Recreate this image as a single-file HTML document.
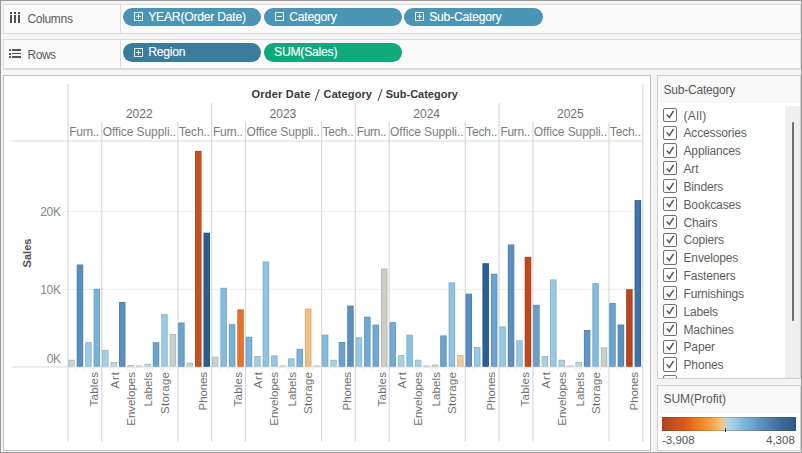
<!DOCTYPE html>
<html><head><meta charset="utf-8"><style>
html,body{margin:0;padding:0;}
body{width:802px;height:453px;position:relative;overflow:hidden;background:#f4f4f4;font-family:"Liberation Sans", sans-serif;}
.frame{position:absolute;left:0;top:0;width:800px;height:451px;border:1px solid #9a9a9a;}
.box{position:absolute;box-sizing:border-box;border:1px solid #dcdcdc;background:#fafafa;}
.t{position:absolute;white-space:nowrap;line-height:1;}
.rl{position:absolute;width:200px;height:14px;line-height:14px;text-align:right;font-size:11.5px;color:#717171;white-space:nowrap;transform-origin:100px 7px;transform:rotate(-90deg) translate(-100px,0);}
.pill{position:absolute;height:18.7px;border-radius:9.4px;color:#fff;font-size:12.2px;line-height:18.0px;letter-spacing:-0.25px;white-space:nowrap;-webkit-text-stroke:0.12px #fff;}
.pill .ic{position:absolute;left:11px;top:4.7px;width:7px;height:7px;border:1px solid #e8f0f4;}
.pill .tx{position:absolute;left:25.2px;top:0;}
.panel{position:absolute;box-sizing:border-box;border:1px solid #cfcfcf;background:#fff;}
.cb{position:absolute;left:663px;width:14.3px;height:14.2px;box-sizing:border-box;border:1.5px solid #727272;border-radius:2px;background:#fff;}
.fi{position:absolute;left:683.5px;font-size:12px;letter-spacing:-0.15px;color:#555;white-space:nowrap;line-height:1;}
</style></head><body>
<div class="frame"></div>
<div class="box" style="left:3px;top:4px;width:798px;height:30px;"></div>
<div class="box" style="left:3px;top:39px;width:798px;height:31px;border-bottom:2px solid #dedede"></div>
<div style="position:absolute;left:120px;top:5px;width:1px;height:28px;background:#dcdcdc"></div>
<div style="position:absolute;left:120px;top:40px;width:1px;height:28px;background:#dcdcdc"></div>
<div style="position:absolute;left:10.30px;top:12.2px;width:1.8px;height:1.8px;background:#505050"></div><div style="position:absolute;left:10.30px;top:15.1px;width:1.8px;height:8px;background:#505050"></div><div style="position:absolute;left:14.00px;top:12.2px;width:1.8px;height:1.8px;background:#505050"></div><div style="position:absolute;left:14.00px;top:15.1px;width:1.8px;height:8px;background:#505050"></div><div style="position:absolute;left:17.80px;top:12.2px;width:1.8px;height:1.8px;background:#505050"></div><div style="position:absolute;left:17.80px;top:15.1px;width:1.8px;height:8px;background:#505050"></div><div style="position:absolute;left:9.2px;top:48.80px;width:2px;height:2px;background:#505050;border-radius:0.5px"></div><div style="position:absolute;left:12.3px;top:48.90px;width:8.4px;height:1.8px;background:#555"></div><div style="position:absolute;left:9.2px;top:52.50px;width:2px;height:2px;background:#505050;border-radius:0.5px"></div><div style="position:absolute;left:12.3px;top:52.60px;width:8.4px;height:1.8px;background:#555"></div><div style="position:absolute;left:9.2px;top:56.20px;width:2px;height:2px;background:#505050;border-radius:0.5px"></div><div style="position:absolute;left:12.3px;top:56.30px;width:8.4px;height:1.8px;background:#555"></div><div class="t" style="left:27.4px;top:12.94px;font-size:12px;color:#5a5a5a;letter-spacing:-0.3px">Columns</div><div class="t" style="left:27.6px;top:48.94px;font-size:12px;color:#5a5a5a;letter-spacing:-0.5px">Rows</div><div class="pill" style="left:123px;top:7.7px;width:138px;background:#4a94b4"><div class="ic"><div style="position:absolute;left:1px;top:3px;width:5px;height:1px;background:#e8f0f4"></div><div style="position:absolute;left:3px;top:1px;width:1px;height:5px;background:#e8f0f4"></div></div><div class="tx">YEAR(Order Date)</div></div><div class="pill" style="left:264px;top:7.7px;width:138px;background:#4a94b4"><div class="ic"><div style="position:absolute;left:1px;top:3px;width:5px;height:1px;background:#e8f0f4"></div></div><div class="tx">Category</div></div><div class="pill" style="left:404px;top:7.7px;width:139px;background:#4a94b4"><div class="ic"><div style="position:absolute;left:1px;top:3px;width:5px;height:1px;background:#e8f0f4"></div><div style="position:absolute;left:3px;top:1px;width:1px;height:5px;background:#e8f0f4"></div></div><div class="tx">Sub-Category</div></div><div class="pill" style="left:123px;top:43px;width:138px;background:#3b7c9c"><div class="ic"><div style="position:absolute;left:1px;top:3px;width:5px;height:1px;background:#e8f0f4"></div><div style="position:absolute;left:3px;top:1px;width:1px;height:5px;background:#e8f0f4"></div></div><div class="tx">Region</div></div><div class="pill" style="left:264px;top:43px;width:138px;background:#0eaa7a"><div class="tx" style="left:10px">SUM(Sales)</div></div><div class="panel" style="left:3px;top:75px;width:648px;height:376px;border-color:#c4c4c4"></div><svg style="position:absolute;left:0;top:0" width="802" height="453" viewBox="0 0 802 453"><line x1="62.5" y1="211.4" x2="642" y2="211.4" stroke="#efefef" stroke-width="1"/><line x1="62.5" y1="289.4" x2="642" y2="289.4" stroke="#efefef" stroke-width="1"/><line x1="12" y1="141" x2="642" y2="141" stroke="#d9d9d9" stroke-width="1"/><line x1="315.1" y1="100.9" x2="319.3" y2="89.2" stroke="#4a4a4a" stroke-width="1.1"/><line x1="377.9" y1="100.9" x2="382.1" y2="89.2" stroke="#4a4a4a" stroke-width="1.1"/><line x1="12" y1="367" x2="642" y2="367" stroke="#dcdcdc" stroke-width="1.2"/><line x1="68.00" y1="84" x2="68.00" y2="441.5" stroke="#d6d6d6" stroke-width="1.1"/><line x1="211.70" y1="103" x2="211.70" y2="441.5" stroke="#d6d6d6" stroke-width="1.1"/><line x1="355.40" y1="103" x2="355.40" y2="441.5" stroke="#d6d6d6" stroke-width="1.1"/><line x1="499.10" y1="103" x2="499.10" y2="441.5" stroke="#d6d6d6" stroke-width="1.1"/><line x1="642.80" y1="84" x2="642.80" y2="441.5" stroke="#d6d6d6" stroke-width="1.1"/><line x1="101.81" y1="122" x2="101.81" y2="441.5" stroke="#d6d6d6" stroke-width="1.1"/><line x1="177.89" y1="122" x2="177.89" y2="441.5" stroke="#d6d6d6" stroke-width="1.1"/><line x1="245.51" y1="122" x2="245.51" y2="441.5" stroke="#d6d6d6" stroke-width="1.1"/><line x1="321.59" y1="122" x2="321.59" y2="441.5" stroke="#d6d6d6" stroke-width="1.1"/><line x1="389.21" y1="122" x2="389.21" y2="441.5" stroke="#d6d6d6" stroke-width="1.1"/><line x1="465.29" y1="122" x2="465.29" y2="441.5" stroke="#d6d6d6" stroke-width="1.1"/><line x1="532.91" y1="122" x2="532.91" y2="441.5" stroke="#d6d6d6" stroke-width="1.1"/><line x1="608.99" y1="122" x2="608.99" y2="441.5" stroke="#d6d6d6" stroke-width="1.1"/><line x1="76.45" y1="367.6" x2="76.45" y2="370" stroke="#ededed" stroke-width="1"/><line x1="84.91" y1="367.6" x2="84.91" y2="370" stroke="#ededed" stroke-width="1"/><line x1="93.36" y1="367.6" x2="93.36" y2="370" stroke="#ededed" stroke-width="1"/><line x1="110.26" y1="367.6" x2="110.26" y2="370" stroke="#ededed" stroke-width="1"/><line x1="118.72" y1="367.6" x2="118.72" y2="370" stroke="#ededed" stroke-width="1"/><line x1="127.17" y1="367.6" x2="127.17" y2="370" stroke="#ededed" stroke-width="1"/><line x1="135.62" y1="367.6" x2="135.62" y2="370" stroke="#ededed" stroke-width="1"/><line x1="144.08" y1="367.6" x2="144.08" y2="370" stroke="#ededed" stroke-width="1"/><line x1="152.53" y1="367.6" x2="152.53" y2="370" stroke="#ededed" stroke-width="1"/><line x1="160.98" y1="367.6" x2="160.98" y2="370" stroke="#ededed" stroke-width="1"/><line x1="169.44" y1="367.6" x2="169.44" y2="370" stroke="#ededed" stroke-width="1"/><line x1="186.34" y1="367.6" x2="186.34" y2="370" stroke="#ededed" stroke-width="1"/><line x1="194.79" y1="367.6" x2="194.79" y2="370" stroke="#ededed" stroke-width="1"/><line x1="203.25" y1="367.6" x2="203.25" y2="370" stroke="#ededed" stroke-width="1"/><line x1="220.15" y1="367.6" x2="220.15" y2="370" stroke="#ededed" stroke-width="1"/><line x1="228.61" y1="367.6" x2="228.61" y2="370" stroke="#ededed" stroke-width="1"/><line x1="237.06" y1="367.6" x2="237.06" y2="370" stroke="#ededed" stroke-width="1"/><line x1="253.96" y1="367.6" x2="253.96" y2="370" stroke="#ededed" stroke-width="1"/><line x1="262.42" y1="367.6" x2="262.42" y2="370" stroke="#ededed" stroke-width="1"/><line x1="270.87" y1="367.6" x2="270.87" y2="370" stroke="#ededed" stroke-width="1"/><line x1="279.32" y1="367.6" x2="279.32" y2="370" stroke="#ededed" stroke-width="1"/><line x1="287.78" y1="367.6" x2="287.78" y2="370" stroke="#ededed" stroke-width="1"/><line x1="296.23" y1="367.6" x2="296.23" y2="370" stroke="#ededed" stroke-width="1"/><line x1="304.68" y1="367.6" x2="304.68" y2="370" stroke="#ededed" stroke-width="1"/><line x1="313.14" y1="367.6" x2="313.14" y2="370" stroke="#ededed" stroke-width="1"/><line x1="330.04" y1="367.6" x2="330.04" y2="370" stroke="#ededed" stroke-width="1"/><line x1="338.49" y1="367.6" x2="338.49" y2="370" stroke="#ededed" stroke-width="1"/><line x1="346.95" y1="367.6" x2="346.95" y2="370" stroke="#ededed" stroke-width="1"/><line x1="363.85" y1="367.6" x2="363.85" y2="370" stroke="#ededed" stroke-width="1"/><line x1="372.31" y1="367.6" x2="372.31" y2="370" stroke="#ededed" stroke-width="1"/><line x1="380.76" y1="367.6" x2="380.76" y2="370" stroke="#ededed" stroke-width="1"/><line x1="397.66" y1="367.6" x2="397.66" y2="370" stroke="#ededed" stroke-width="1"/><line x1="406.12" y1="367.6" x2="406.12" y2="370" stroke="#ededed" stroke-width="1"/><line x1="414.57" y1="367.6" x2="414.57" y2="370" stroke="#ededed" stroke-width="1"/><line x1="423.02" y1="367.6" x2="423.02" y2="370" stroke="#ededed" stroke-width="1"/><line x1="431.48" y1="367.6" x2="431.48" y2="370" stroke="#ededed" stroke-width="1"/><line x1="439.93" y1="367.6" x2="439.93" y2="370" stroke="#ededed" stroke-width="1"/><line x1="448.38" y1="367.6" x2="448.38" y2="370" stroke="#ededed" stroke-width="1"/><line x1="456.84" y1="367.6" x2="456.84" y2="370" stroke="#ededed" stroke-width="1"/><line x1="473.74" y1="367.6" x2="473.74" y2="370" stroke="#ededed" stroke-width="1"/><line x1="482.19" y1="367.6" x2="482.19" y2="370" stroke="#ededed" stroke-width="1"/><line x1="490.65" y1="367.6" x2="490.65" y2="370" stroke="#ededed" stroke-width="1"/><line x1="507.55" y1="367.6" x2="507.55" y2="370" stroke="#ededed" stroke-width="1"/><line x1="516.01" y1="367.6" x2="516.01" y2="370" stroke="#ededed" stroke-width="1"/><line x1="524.46" y1="367.6" x2="524.46" y2="370" stroke="#ededed" stroke-width="1"/><line x1="541.36" y1="367.6" x2="541.36" y2="370" stroke="#ededed" stroke-width="1"/><line x1="549.82" y1="367.6" x2="549.82" y2="370" stroke="#ededed" stroke-width="1"/><line x1="558.27" y1="367.6" x2="558.27" y2="370" stroke="#ededed" stroke-width="1"/><line x1="566.72" y1="367.6" x2="566.72" y2="370" stroke="#ededed" stroke-width="1"/><line x1="575.18" y1="367.6" x2="575.18" y2="370" stroke="#ededed" stroke-width="1"/><line x1="583.63" y1="367.6" x2="583.63" y2="370" stroke="#ededed" stroke-width="1"/><line x1="592.08" y1="367.6" x2="592.08" y2="370" stroke="#ededed" stroke-width="1"/><line x1="600.54" y1="367.6" x2="600.54" y2="370" stroke="#ededed" stroke-width="1"/><line x1="617.44" y1="367.6" x2="617.44" y2="370" stroke="#ededed" stroke-width="1"/><line x1="625.89" y1="367.6" x2="625.89" y2="370" stroke="#ededed" stroke-width="1"/><line x1="634.35" y1="367.6" x2="634.35" y2="370" stroke="#ededed" stroke-width="1"/><rect x="68.25" y="359.8" width="6.5" height="6.8" fill="#afbdbf"/><rect x="69.15" y="360.7" width="4.70" height="5.9" fill="#c3d3d5"/><rect x="76.70" y="264.5" width="6.5" height="102.1" fill="#5180ab"/><rect x="77.60" y="265.4" width="4.70" height="101.2" fill="#5b8fbf"/><rect x="85.16" y="342.2" width="6.5" height="24.4" fill="#8cb6cc"/><rect x="86.06" y="343.1" width="4.70" height="23.5" fill="#9ccbe3"/><rect x="93.61" y="288.8" width="6.5" height="77.8" fill="#6da1c3"/><rect x="94.51" y="289.7" width="4.70" height="76.9" fill="#7ab3d9"/><rect x="102.06" y="349.9" width="6.5" height="16.7" fill="#94bacc"/><rect x="102.96" y="350.8" width="4.70" height="15.8" fill="#a5cfe3"/><rect x="110.51" y="362.0" width="6.5" height="4.6" fill="#b3bebe"/><rect x="111.41" y="362.9" width="4.70" height="3.7" fill="#c7d4d4"/><rect x="118.97" y="302.0" width="6.5" height="64.6" fill="#5180ac"/><rect x="119.87" y="302.9" width="4.70" height="63.7" fill="#5b8fc0"/><rect x="127.42" y="365.0" width="6.5" height="1.6" fill="#b4bdbb"/><rect x="128.32" y="365.9" width="4.70" height="0.7" fill="#c9d2d0"/><rect x="135.87" y="365.6" width="6.5" height="1.0" fill="#bdbbb4"/><rect x="136.77" y="366.5" width="4.70" height="0.1" fill="#d3d0c8"/><rect x="144.33" y="363.8" width="6.5" height="2.8" fill="#b1bdbe"/><rect x="145.23" y="364.7" width="4.70" height="1.9" fill="#c5d3d4"/><rect x="152.78" y="342.2" width="6.5" height="24.4" fill="#5f92bb"/><rect x="153.68" y="343.1" width="4.70" height="23.5" fill="#6aa3d0"/><rect x="161.23" y="314.2" width="6.5" height="52.4" fill="#8cb5cc"/><rect x="162.13" y="315.1" width="4.70" height="51.5" fill="#9ccae3"/><rect x="169.69" y="334.0" width="6.5" height="32.6" fill="#b4bbba"/><rect x="170.59" y="334.9" width="4.70" height="31.7" fill="#c8d0cf"/><rect x="178.14" y="322.5" width="6.5" height="44.1" fill="#5f92bb"/><rect x="179.04" y="323.4" width="4.70" height="43.2" fill="#6aa3d0"/><rect x="186.59" y="362.7" width="6.5" height="3.9" fill="#b4bdbc"/><rect x="187.49" y="363.6" width="4.70" height="3.0" fill="#c8d2d1"/><rect x="195.04" y="150.9" width="6.5" height="215.7" fill="#b4481b"/><rect x="195.94" y="151.8" width="4.70" height="214.8" fill="#c8501e"/><rect x="203.50" y="232.7" width="6.5" height="133.9" fill="#255582"/><rect x="204.40" y="233.6" width="4.70" height="133.0" fill="#2a5f91"/><rect x="211.95" y="356.7" width="6.5" height="9.9" fill="#b4bbba"/><rect x="212.85" y="357.6" width="4.70" height="9.0" fill="#c8d0cf"/><rect x="220.40" y="287.8" width="6.5" height="78.8" fill="#78a8c6"/><rect x="221.30" y="288.7" width="4.70" height="77.9" fill="#86bbdd"/><rect x="228.86" y="324.2" width="6.5" height="42.4" fill="#6d9ec0"/><rect x="229.76" y="325.1" width="4.70" height="41.5" fill="#7ab0d6"/><rect x="237.31" y="309.4" width="6.5" height="57.2" fill="#d06625"/><rect x="238.21" y="310.3" width="4.70" height="56.3" fill="#e8722a"/><rect x="245.76" y="336.7" width="6.5" height="29.9" fill="#6da1c3"/><rect x="246.66" y="337.6" width="4.70" height="29.0" fill="#7ab3d9"/><rect x="254.21" y="356.0" width="6.5" height="10.6" fill="#98b7c5"/><rect x="255.11" y="356.9" width="4.70" height="9.7" fill="#a9ccdb"/><rect x="262.67" y="261.5" width="6.5" height="105.1" fill="#80afcb"/><rect x="263.57" y="262.4" width="4.70" height="104.2" fill="#8fc3e2"/><rect x="271.12" y="355.4" width="6.5" height="11.2" fill="#88b4cb"/><rect x="272.02" y="356.3" width="4.70" height="10.3" fill="#98c8e2"/><rect x="279.57" y="365.6" width="6.5" height="1.0" fill="#babab4"/><rect x="280.47" y="366.5" width="4.70" height="0.1" fill="#cfcfc8"/><rect x="288.03" y="358.3" width="6.5" height="8.3" fill="#8cb6cc"/><rect x="288.93" y="359.2" width="4.70" height="7.4" fill="#9ccbe3"/><rect x="296.48" y="348.8" width="6.5" height="17.8" fill="#6da1c3"/><rect x="297.38" y="349.7" width="4.70" height="16.9" fill="#7ab3d9"/><rect x="304.93" y="308.6" width="6.5" height="58.0" fill="#d9ac73"/><rect x="305.83" y="309.5" width="4.70" height="57.1" fill="#f2c080"/><rect x="313.39" y="365.6" width="6.5" height="1.0" fill="#babab4"/><rect x="314.29" y="366.5" width="4.70" height="0.1" fill="#cfcfc8"/><rect x="321.84" y="334.7" width="6.5" height="31.9" fill="#78a8c6"/><rect x="322.74" y="335.6" width="4.70" height="31.0" fill="#86bbdd"/><rect x="330.29" y="359.8" width="6.5" height="6.8" fill="#98bbc9"/><rect x="331.19" y="360.7" width="4.70" height="5.9" fill="#a9d0e0"/><rect x="338.74" y="342.0" width="6.5" height="24.6" fill="#5f92bb"/><rect x="339.64" y="342.9" width="4.70" height="23.7" fill="#6aa3d0"/><rect x="347.20" y="305.6" width="6.5" height="61.0" fill="#5180ac"/><rect x="348.10" y="306.5" width="4.70" height="60.1" fill="#5b8fc0"/><rect x="355.65" y="337.3" width="6.5" height="29.3" fill="#88b4cb"/><rect x="356.55" y="338.2" width="4.70" height="28.4" fill="#98c8e2"/><rect x="364.10" y="316.7" width="6.5" height="49.9" fill="#6697be"/><rect x="365.00" y="317.6" width="4.70" height="49.0" fill="#72a8d4"/><rect x="372.56" y="324.6" width="6.5" height="42.0" fill="#6697be"/><rect x="373.46" y="325.5" width="4.70" height="41.1" fill="#72a8d4"/><rect x="381.01" y="268.5" width="6.5" height="98.1" fill="#b8b8b1"/><rect x="381.91" y="269.4" width="4.70" height="97.2" fill="#cdcdc5"/><rect x="389.46" y="322.2" width="6.5" height="44.4" fill="#6899bf"/><rect x="390.36" y="323.1" width="4.70" height="43.5" fill="#74aad5"/><rect x="397.91" y="355.0" width="6.5" height="11.6" fill="#97bbc9"/><rect x="398.81" y="355.9" width="4.70" height="10.7" fill="#a8d0e0"/><rect x="406.37" y="334.7" width="6.5" height="31.9" fill="#7eaeca"/><rect x="407.27" y="335.6" width="4.70" height="31.0" fill="#8dc2e1"/><rect x="414.82" y="359.8" width="6.5" height="6.8" fill="#98bbc9"/><rect x="415.72" y="360.7" width="4.70" height="5.9" fill="#a9d0e0"/><rect x="423.27" y="365.6" width="6.5" height="1.0" fill="#babab4"/><rect x="424.17" y="366.5" width="4.70" height="0.1" fill="#cfcfc8"/><rect x="431.73" y="364.5" width="6.5" height="2.1" fill="#b1bdbe"/><rect x="432.63" y="365.4" width="4.70" height="1.2" fill="#c5d3d4"/><rect x="440.18" y="335.4" width="6.5" height="31.2" fill="#5f92bb"/><rect x="441.08" y="336.3" width="4.70" height="30.3" fill="#6aa3d0"/><rect x="448.63" y="282.3" width="6.5" height="84.3" fill="#80afcb"/><rect x="449.53" y="283.2" width="4.70" height="83.4" fill="#8fc3e2"/><rect x="457.09" y="355.0" width="6.5" height="11.6" fill="#d6b688"/><rect x="457.99" y="355.9" width="4.70" height="10.7" fill="#eecb98"/><rect x="465.54" y="293.7" width="6.5" height="72.9" fill="#5180ac"/><rect x="466.44" y="294.6" width="4.70" height="72.0" fill="#5b8fc0"/><rect x="473.99" y="347.0" width="6.5" height="19.6" fill="#88b4cb"/><rect x="474.89" y="347.9" width="4.70" height="18.7" fill="#98c8e2"/><rect x="482.44" y="263.2" width="6.5" height="103.4" fill="#255582"/><rect x="483.34" y="264.1" width="4.70" height="102.5" fill="#2a5f91"/><rect x="490.90" y="273.8" width="6.5" height="92.8" fill="#5f92bb"/><rect x="491.80" y="274.7" width="4.70" height="91.9" fill="#6aa3d0"/><rect x="499.35" y="326.4" width="6.5" height="40.2" fill="#88b4cb"/><rect x="500.25" y="327.3" width="4.70" height="39.3" fill="#98c8e2"/><rect x="507.80" y="244.5" width="6.5" height="122.1" fill="#5180ac"/><rect x="508.70" y="245.4" width="4.70" height="121.2" fill="#5b8fc0"/><rect x="516.26" y="340.3" width="6.5" height="26.3" fill="#88b4cb"/><rect x="517.16" y="341.2" width="4.70" height="25.4" fill="#98c8e2"/><rect x="524.71" y="256.9" width="6.5" height="109.7" fill="#ac421b"/><rect x="525.61" y="257.8" width="4.70" height="108.8" fill="#c04a1e"/><rect x="533.16" y="304.8" width="6.5" height="61.8" fill="#5f8fb7"/><rect x="534.06" y="305.7" width="4.70" height="60.9" fill="#6a9fcc"/><rect x="541.61" y="356.0" width="6.5" height="10.6" fill="#98bbc9"/><rect x="542.51" y="356.9" width="4.70" height="9.7" fill="#a9d0e0"/><rect x="550.07" y="279.4" width="6.5" height="87.2" fill="#88b4cb"/><rect x="550.97" y="280.3" width="4.70" height="86.3" fill="#98c8e2"/><rect x="558.52" y="359.8" width="6.5" height="6.8" fill="#98bbc9"/><rect x="559.42" y="360.7" width="4.70" height="5.9" fill="#a9d0e0"/><rect x="566.97" y="365.5" width="6.5" height="1.1" fill="#babab4"/><rect x="567.87" y="366.4" width="4.70" height="0.2" fill="#cfcfc8"/><rect x="575.43" y="362.0" width="6.5" height="4.6" fill="#a6c0c8"/><rect x="576.33" y="362.9" width="4.70" height="3.7" fill="#b9d6df"/><rect x="583.88" y="330.0" width="6.5" height="36.6" fill="#5585b0"/><rect x="584.78" y="330.9" width="4.70" height="35.7" fill="#5f94c4"/><rect x="592.33" y="283.2" width="6.5" height="83.4" fill="#78a8c6"/><rect x="593.23" y="284.1" width="4.70" height="82.5" fill="#86bbdd"/><rect x="600.79" y="347.3" width="6.5" height="19.3" fill="#b4bbb7"/><rect x="601.69" y="348.2" width="4.70" height="18.4" fill="#c8d0cc"/><rect x="609.24" y="303.0" width="6.5" height="63.6" fill="#5f92bb"/><rect x="610.14" y="303.9" width="4.70" height="62.7" fill="#6aa3d0"/><rect x="617.69" y="324.5" width="6.5" height="42.1" fill="#5180ac"/><rect x="618.59" y="325.4" width="4.70" height="41.2" fill="#5b8fc0"/><rect x="626.14" y="289.2" width="6.5" height="77.4" fill="#a53f19"/><rect x="627.04" y="290.1" width="4.70" height="76.5" fill="#b8461c"/><rect x="634.60" y="200.1" width="6.5" height="166.5" fill="#386697"/><rect x="635.50" y="201.0" width="4.70" height="165.6" fill="#3f72a8"/></svg><div class="t" style="left:251.6px;top:88.89px;font-size:11px;color:#3a3a3a;font-weight:bold;letter-spacing:0.2px">Order Date</div><div class="t" style="left:323.6px;top:88.89px;font-size:11px;color:#3a3a3a;font-weight:bold;letter-spacing:0.1px">Category</div><div class="t" style="left:385.7px;top:88.89px;font-size:11px;color:#3a3a3a;font-weight:bold;letter-spacing:0px">Sub-Category</div><div class="t" style="left:39.25px;width:200px;text-align:center;top:107.64px;font-size:12px;color:#707070;font-weight:normal">2022</div><div class="t" style="left:69.3px;top:126.44px;font-size:12px;color:#7d7d7d;font-weight:normal;letter-spacing:-0.3px">Furn..</div><div class="t" style="left:102.71176470588236px;top:126.44px;font-size:12px;color:#7d7d7d;font-weight:normal;letter-spacing:-0.08px">Office Suppli..</div><div class="t" style="left:178.68823529411765px;top:126.44px;font-size:12px;color:#7d7d7d;font-weight:normal;letter-spacing:-0.15px">Tech..</div><div class="t" style="left:182.95px;width:200px;text-align:center;top:107.64px;font-size:12px;color:#707070;font-weight:normal">2023</div><div class="t" style="left:213.0px;top:126.44px;font-size:12px;color:#7d7d7d;font-weight:normal;letter-spacing:-0.3px">Furn..</div><div class="t" style="left:246.41176470588235px;top:126.44px;font-size:12px;color:#7d7d7d;font-weight:normal;letter-spacing:-0.08px">Office Suppli..</div><div class="t" style="left:322.38823529411764px;top:126.44px;font-size:12px;color:#7d7d7d;font-weight:normal;letter-spacing:-0.15px">Tech..</div><div class="t" style="left:326.65px;width:200px;text-align:center;top:107.64px;font-size:12px;color:#707070;font-weight:normal">2024</div><div class="t" style="left:356.7px;top:126.44px;font-size:12px;color:#7d7d7d;font-weight:normal;letter-spacing:-0.3px">Furn..</div><div class="t" style="left:390.1117647058823px;top:126.44px;font-size:12px;color:#7d7d7d;font-weight:normal;letter-spacing:-0.08px">Office Suppli..</div><div class="t" style="left:466.0882352941176px;top:126.44px;font-size:12px;color:#7d7d7d;font-weight:normal;letter-spacing:-0.15px">Tech..</div><div class="t" style="left:470.35px;width:200px;text-align:center;top:107.64px;font-size:12px;color:#707070;font-weight:normal">2025</div><div class="t" style="left:500.4px;top:126.44px;font-size:12px;color:#7d7d7d;font-weight:normal;letter-spacing:-0.3px">Furn..</div><div class="t" style="left:533.8117647058823px;top:126.44px;font-size:12px;color:#7d7d7d;font-weight:normal;letter-spacing:-0.08px">Office Suppli..</div><div class="t" style="left:609.7882352941176px;top:126.44px;font-size:12px;color:#7d7d7d;font-weight:normal;letter-spacing:-0.15px">Tech..</div><div class="t" style="left:-39.40px;width:100px;text-align:right;top:206.44px;font-size:12px;color:#858585;letter-spacing:-0.35px">20K</div><div class="t" style="left:-39.40px;width:100px;text-align:right;top:284.24px;font-size:12px;color:#858585;letter-spacing:-0.35px">10K</div><div class="t" style="left:-39.40px;width:100px;text-align:right;top:352.84px;font-size:12px;color:#858585;letter-spacing:-0.35px">0K</div><div class="t" style="left:-23px;top:245.9px;width:100px;height:14px;line-height:14px;text-align:center;font-size:11px;font-weight:bold;color:#505050;transform:rotate(-90deg)">Sales</div><div class="rl" style="left:-5.80px;top:364.50px;letter-spacing:0.24px"><span style="margin-right:-0.24px">Tables</span></div><div class="rl" style="left:14.50px;top:364.50px;letter-spacing:0.85px"><span style="margin-right:-0.85px">Art</span></div><div class="rl" style="left:30.50px;top:364.50px;letter-spacing:0px"><span style="margin-right:0px">Envelopes</span></div><div class="rl" style="left:48.40px;top:364.50px;letter-spacing:0.12px"><span style="margin-right:-0.12px">Labels</span></div><div class="rl" style="left:64.50px;top:364.50px;letter-spacing:0.28px"><span style="margin-right:-0.28px">Storage</span></div><div class="rl" style="left:103.20px;top:364.50px;letter-spacing:-0.12px"><span style="margin-right:0.12px">Phones</span></div><div class="rl" style="left:137.90px;top:364.50px;letter-spacing:0.24px"><span style="margin-right:-0.24px">Tables</span></div><div class="rl" style="left:158.20px;top:364.50px;letter-spacing:0.85px"><span style="margin-right:-0.85px">Art</span></div><div class="rl" style="left:174.20px;top:364.50px;letter-spacing:0px"><span style="margin-right:0px">Envelopes</span></div><div class="rl" style="left:192.10px;top:364.50px;letter-spacing:0.12px"><span style="margin-right:-0.12px">Labels</span></div><div class="rl" style="left:208.20px;top:364.50px;letter-spacing:0.28px"><span style="margin-right:-0.28px">Storage</span></div><div class="rl" style="left:246.90px;top:364.50px;letter-spacing:-0.12px"><span style="margin-right:0.12px">Phones</span></div><div class="rl" style="left:281.60px;top:364.50px;letter-spacing:0.24px"><span style="margin-right:-0.24px">Tables</span></div><div class="rl" style="left:301.90px;top:364.50px;letter-spacing:0.85px"><span style="margin-right:-0.85px">Art</span></div><div class="rl" style="left:317.90px;top:364.50px;letter-spacing:0px"><span style="margin-right:0px">Envelopes</span></div><div class="rl" style="left:335.80px;top:364.50px;letter-spacing:0.12px"><span style="margin-right:-0.12px">Labels</span></div><div class="rl" style="left:351.90px;top:364.50px;letter-spacing:0.28px"><span style="margin-right:-0.28px">Storage</span></div><div class="rl" style="left:390.60px;top:364.50px;letter-spacing:-0.12px"><span style="margin-right:0.12px">Phones</span></div><div class="rl" style="left:425.30px;top:364.50px;letter-spacing:0.24px"><span style="margin-right:-0.24px">Tables</span></div><div class="rl" style="left:445.60px;top:364.50px;letter-spacing:0.85px"><span style="margin-right:-0.85px">Art</span></div><div class="rl" style="left:461.60px;top:364.50px;letter-spacing:0px"><span style="margin-right:0px">Envelopes</span></div><div class="rl" style="left:479.50px;top:364.50px;letter-spacing:0.12px"><span style="margin-right:-0.12px">Labels</span></div><div class="rl" style="left:495.60px;top:364.50px;letter-spacing:0.28px"><span style="margin-right:-0.28px">Storage</span></div><div class="rl" style="left:534.30px;top:364.50px;letter-spacing:-0.12px"><span style="margin-right:0.12px">Phones</span></div><div class="panel" style="left:657px;top:75px;width:144px;height:304px;border-color:#d0d0d0"></div><div style="position:absolute;left:658px;top:76px;width:142px;height:27px;background:#f8f8f8"></div><div class="t" style="left:663.5px;top:84.24px;font-size:12px;color:#585858;letter-spacing:-0.2px">Sub-Category</div><div style="position:absolute;left:785px;top:105.5px;width:15px;height:272px;background:#efefef"></div><div style="position:absolute;left:791.6px;top:121.7px;width:2px;height:199.8px;background:#6e6e6e;border-radius:1px"></div><div style="position:absolute;left:658px;top:104px;width:127px;height:274px;overflow:hidden"><div class="cb" style="left:5.2px;top:3.80px"><svg width="14" height="14" style="position:absolute;left:-1.5px;top:-1.5px" viewBox="0 0 14 14"><path d="M3.7 7.4 L6.4 10.5 L10.6 3.9" fill="none" stroke="#585858" stroke-width="1.55"/></svg></div><div class="fi" style="letter-spacing:0.35px;left:25.5px;top:5.64px;color:#606060">(All)</div><div class="cb" style="left:5.2px;top:21.63px"><svg width="14" height="14" style="position:absolute;left:-1.5px;top:-1.5px" viewBox="0 0 14 14"><path d="M3.7 7.4 L6.4 10.5 L10.6 3.9" fill="none" stroke="#585858" stroke-width="1.55"/></svg></div><div class="fi" style="left:25.5px;top:23.47px;color:#606060">Accessories</div><div class="cb" style="left:5.2px;top:39.46px"><svg width="14" height="14" style="position:absolute;left:-1.5px;top:-1.5px" viewBox="0 0 14 14"><path d="M3.7 7.4 L6.4 10.5 L10.6 3.9" fill="none" stroke="#585858" stroke-width="1.55"/></svg></div><div class="fi" style="left:25.5px;top:41.30px;color:#606060">Appliances</div><div class="cb" style="left:5.2px;top:57.29px"><svg width="14" height="14" style="position:absolute;left:-1.5px;top:-1.5px" viewBox="0 0 14 14"><path d="M3.7 7.4 L6.4 10.5 L10.6 3.9" fill="none" stroke="#585858" stroke-width="1.55"/></svg></div><div class="fi" style="left:25.5px;top:59.13px;color:#606060">Art</div><div class="cb" style="left:5.2px;top:75.12px"><svg width="14" height="14" style="position:absolute;left:-1.5px;top:-1.5px" viewBox="0 0 14 14"><path d="M3.7 7.4 L6.4 10.5 L10.6 3.9" fill="none" stroke="#585858" stroke-width="1.55"/></svg></div><div class="fi" style="left:25.5px;top:76.96px;color:#606060">Binders</div><div class="cb" style="left:5.2px;top:92.95px"><svg width="14" height="14" style="position:absolute;left:-1.5px;top:-1.5px" viewBox="0 0 14 14"><path d="M3.7 7.4 L6.4 10.5 L10.6 3.9" fill="none" stroke="#585858" stroke-width="1.55"/></svg></div><div class="fi" style="left:25.5px;top:94.79px;color:#606060">Bookcases</div><div class="cb" style="left:5.2px;top:110.78px"><svg width="14" height="14" style="position:absolute;left:-1.5px;top:-1.5px" viewBox="0 0 14 14"><path d="M3.7 7.4 L6.4 10.5 L10.6 3.9" fill="none" stroke="#585858" stroke-width="1.55"/></svg></div><div class="fi" style="left:25.5px;top:112.62px;color:#606060">Chairs</div><div class="cb" style="left:5.2px;top:128.61px"><svg width="14" height="14" style="position:absolute;left:-1.5px;top:-1.5px" viewBox="0 0 14 14"><path d="M3.7 7.4 L6.4 10.5 L10.6 3.9" fill="none" stroke="#585858" stroke-width="1.55"/></svg></div><div class="fi" style="left:25.5px;top:130.45px;color:#606060">Copiers</div><div class="cb" style="left:5.2px;top:146.44px"><svg width="14" height="14" style="position:absolute;left:-1.5px;top:-1.5px" viewBox="0 0 14 14"><path d="M3.7 7.4 L6.4 10.5 L10.6 3.9" fill="none" stroke="#585858" stroke-width="1.55"/></svg></div><div class="fi" style="left:25.5px;top:148.28px;color:#606060">Envelopes</div><div class="cb" style="left:5.2px;top:164.27px"><svg width="14" height="14" style="position:absolute;left:-1.5px;top:-1.5px" viewBox="0 0 14 14"><path d="M3.7 7.4 L6.4 10.5 L10.6 3.9" fill="none" stroke="#585858" stroke-width="1.55"/></svg></div><div class="fi" style="left:25.5px;top:166.11px;color:#606060">Fasteners</div><div class="cb" style="left:5.2px;top:182.10px"><svg width="14" height="14" style="position:absolute;left:-1.5px;top:-1.5px" viewBox="0 0 14 14"><path d="M3.7 7.4 L6.4 10.5 L10.6 3.9" fill="none" stroke="#585858" stroke-width="1.55"/></svg></div><div class="fi" style="left:25.5px;top:183.94px;color:#606060">Furnishings</div><div class="cb" style="left:5.2px;top:199.93px"><svg width="14" height="14" style="position:absolute;left:-1.5px;top:-1.5px" viewBox="0 0 14 14"><path d="M3.7 7.4 L6.4 10.5 L10.6 3.9" fill="none" stroke="#585858" stroke-width="1.55"/></svg></div><div class="fi" style="left:25.5px;top:201.77px;color:#606060">Labels</div><div class="cb" style="left:5.2px;top:217.76px"><svg width="14" height="14" style="position:absolute;left:-1.5px;top:-1.5px" viewBox="0 0 14 14"><path d="M3.7 7.4 L6.4 10.5 L10.6 3.9" fill="none" stroke="#585858" stroke-width="1.55"/></svg></div><div class="fi" style="left:25.5px;top:219.60px;color:#606060">Machines</div><div class="cb" style="left:5.2px;top:235.59px"><svg width="14" height="14" style="position:absolute;left:-1.5px;top:-1.5px" viewBox="0 0 14 14"><path d="M3.7 7.4 L6.4 10.5 L10.6 3.9" fill="none" stroke="#585858" stroke-width="1.55"/></svg></div><div class="fi" style="left:25.5px;top:237.43px;color:#606060">Paper</div><div class="cb" style="left:5.2px;top:253.42px"><svg width="14" height="14" style="position:absolute;left:-1.5px;top:-1.5px" viewBox="0 0 14 14"><path d="M3.7 7.4 L6.4 10.5 L10.6 3.9" fill="none" stroke="#585858" stroke-width="1.55"/></svg></div><div class="fi" style="left:25.5px;top:255.26px;color:#606060">Phones</div><div class="cb" style="left:5.2px;top:271.25px"><svg width="14" height="14" style="position:absolute;left:-1.5px;top:-1.5px" viewBox="0 0 14 14"><path d="M3.7 7.4 L6.4 10.5 L10.6 3.9" fill="none" stroke="#585858" stroke-width="1.55"/></svg></div><div class="fi" style="left:25.5px;top:273.09px;color:#606060"></div></div><div class="panel" style="left:657px;top:385px;width:144px;height:66px;border-color:#d0d0d0"></div><div style="position:absolute;left:658px;top:386px;width:142px;height:26.5px;background:#f8f8f8"></div><div class="t" style="left:663.4px;top:393.44px;font-size:12px;color:#585858">SUM(Profit)</div><div style="position:absolute;left:661.9px;top:416.6px;width:134px;height:14.1px;box-shadow:inset 0 0 0 1px rgba(60,40,20,0.22);background:linear-gradient(to right,#b0441e 0%,#c2501f 8%,#d85a1c 17%,#e86d20 22%,#f0842a 28%,#f9a040 36%,#fcbd6a 43%,#d8d0c0 47%,#a8d2e8 50.7%,#7db5da 62%,#5e93c2 73%,#3e6d9d 88%,#2a5a8c 100%)"></div><div style="position:absolute;left:725px;top:428.2px;width:1.4px;height:3.8px;background:#222;border-radius:0.5px"></div><div class="t" style="left:662px;top:435.07px;font-size:11.5px;color:#555">-3,908</div><div class="t" style="left:694.8px;width:100px;text-align:right;top:435.07px;font-size:11.5px;color:#555">4,308</div></body></html>
